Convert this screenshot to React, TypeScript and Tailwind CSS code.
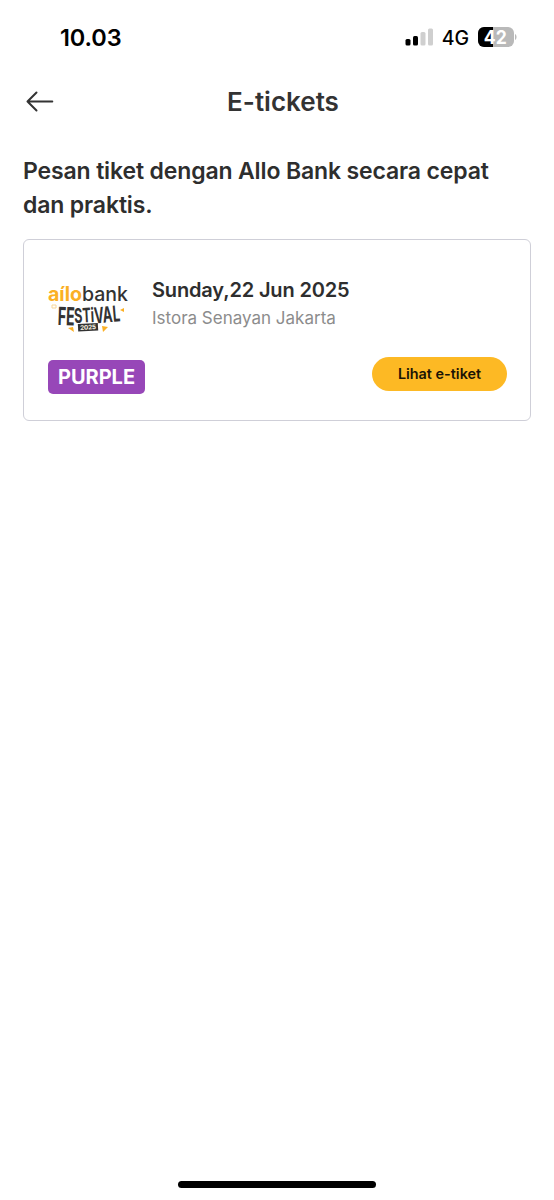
const tickets = [
  {
    id: 1,
    date: "Sunday,22 Jun 2025",
    venue: "Istora Senayan Jakarta",
    category: "PURPLE",
  },
];

function StatusBar() {
  return (
    <div className="h-[74px] pt-[22px] pl-[60px] pr-[37px] flex items-start justify-between text-black">
      <span className="text-[23.5px] leading-[31px] font-semibold tracking-[-0.1px]">10.03</span>
      <div className="flex items-center h-[30px]">
        <svg width="29" height="18" viewBox="0 0 29 18" className="mr-2">
          <rect x="0.5" y="11" width="5" height="6.5" rx="1.5" fill="#000" />
          <rect x="8" y="8" width="5" height="9.5" rx="1.5" fill="#000" />
          <rect x="15.5" y="4" width="5" height="13.5" rx="1.5" fill="#cfcfcf" />
          <rect x="23" y="0.5" width="5" height="17" rx="1.5" fill="#cfcfcf" />
        </svg>
        <span className="text-[19.5px] leading-[30px] font-medium mr-[9px] relative top-px">4G</span>
        <svg width="39" height="20" viewBox="0 0 39 20">
          <rect x="0" y="0" width="36" height="20" rx="6" fill="#b9b9b9" />
          <path d="M6 0H15V20H6A6 6 0 0 1 0 14V6A6 6 0 0 1 6 0Z" fill="#000" />
          <path d="M37 7C39 8 39 12 37 13Z" fill="#b9b9b9" />
          <text x="17.3" y="16.5" textAnchor="middle" textLength="23" fontSize="18.5" fontWeight="700" fill="#fff" lengthAdjust="spacingAndGlyphs">
            42
          </text>
        </svg>
      </div>
    </div>
  );
}

function FestivalLogo() {
  return (
    <svg width="80" height="54" viewBox="0 0 80 54" overflow="visible" fontFamily="Inter, sans-serif">
      <text x="0" y="18.5" fontSize="20" fontWeight="700" fill="#fbb024" textLength="34" lengthAdjust="spacingAndGlyphs">
        aílo
      </text>
      <text x="34" y="18.5" fontSize="20" fontWeight="500" fill="#333" textLength="46" lengthAdjust="spacingAndGlyphs">
        bank
      </text>
      <g fill="#333" fontWeight="700">
        <text transform="rotate(2 10 43)" x="9.5" y="43" fontSize="25" textLength="17" lengthAdjust="spacingAndGlyphs">FE</text>
        <text transform="rotate(-3 27 41)" x="26.5" y="41" fontSize="20" textLength="20" lengthAdjust="spacingAndGlyphs">STi</text>
        <text transform="rotate(-5 46 40)" x="46.5" y="41.5" fontSize="22" textLength="26" lengthAdjust="spacingAndGlyphs">VAL</text>
      </g>
      <g transform="rotate(-3 40 45)">
        <rect x="30" y="41.5" width="20" height="7.5" fill="#333" />
        <text x="32" y="47.5" fontSize="6.3" fontWeight="800" fill="#e8e3d8" textLength="16">2025</text>
      </g>
      {/* confetti */}
      <path d="M4 23H8V26H4Z" fill="none" stroke="#f8d697" />
      <path d="M72 28L76 26V30ZM20 46L25 45L26 50ZM54 44L60 45L55 50Z" fill="#fbb024" />
    </svg>
  );
}

function TicketCard({ ticket }: { ticket: (typeof tickets)[number] }) {
  return (
    <div className="h-[182px] rounded-md border border-[#cfcfd8] pl-6 pr-[23px] pt-[42px]">
      <div className="flex h-[75px]">
        <FestivalLogo />
        <div className="ml-6 -mt-[5px]">
          <div className="text-[20px] leading-[26px] font-semibold tracking-[-0.15px] text-[#2e2e2e] whitespace-nowrap">{ticket.date}</div>
          <div className="mt-[3px] text-[17px] leading-[24px] text-[#8c8c8c] whitespace-nowrap">{ticket.venue}</div>
        </div>
      </div>
      <div className="flex items-start justify-between">
        <span className="mt-[3px] h-[34px] w-[97px] rounded-[5px] bg-[#9747b8] text-white text-[20px] leading-[34px] font-bold text-center">
          {ticket.category}
        </span>
        <button className="h-[34px] w-[135px] rounded-full bg-[#fdb924] text-[#1a1405] text-[14.4px] leading-[32px] pb-px font-semibold">
          Lihat e-tiket
        </button>
      </div>
    </div>
  );
}

export default function App() {
  return (
    <div className="w-full h-[1200px] bg-white flex flex-col font-[Inter,sans-serif]">
      <StatusBar />
      <header className="h-14 pl-[26px] pr-[14px] grid grid-cols-[28px_1fr_28px] items-center">
        <button aria-label="Kembali">
          <svg width="28" height="22" viewBox="0 0 28 22" fill="none" stroke="#333" strokeWidth="2" strokeLinecap="round" strokeLinejoin="round">
            <path d="M26.3 10.5H1.5M10.5 1.5L1.5 10.5L10.5 19.5" />
          </svg>
        </button>
        <h1 className="text-center text-[26px] leading-8 font-semibold text-[#333]">E-tickets</h1>
      </header>
      <main className="flex-1 px-[23px] pt-[24px]">
        <p className="text-[23px] leading-[34px] font-semibold tracking-[-0.14px] text-[#2e2e2e] mb-[17px]">
          Pesan tiket dengan Allo Bank secara cepat
          <br />
          dan praktis.
        </p>
        {tickets.map(t => (
          <TicketCard key={t.id} ticket={t} />
        ))}
      </main>
      <div className="mx-auto mb-[12px] h-[7px] w-[198px] rounded-full bg-black" />
    </div>
  );
}
